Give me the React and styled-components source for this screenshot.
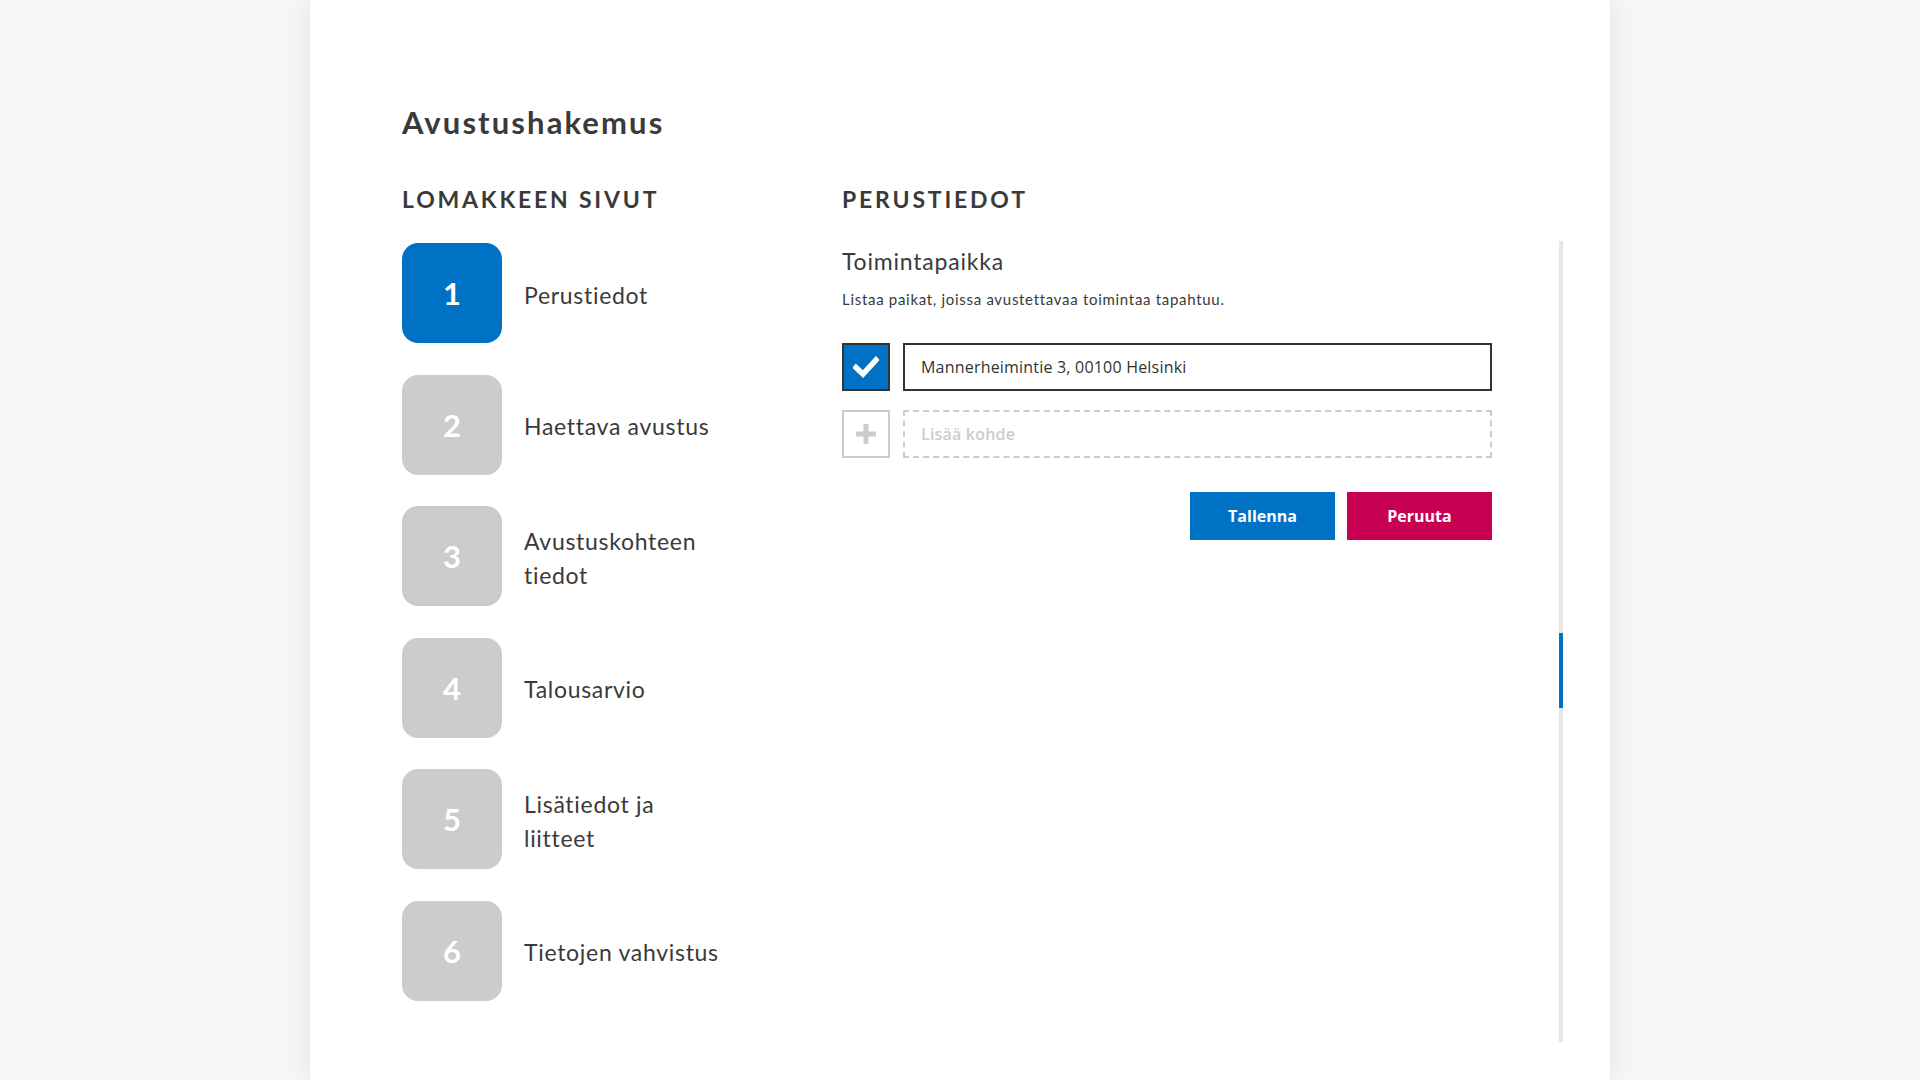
import React from "react";
import styled, { createGlobalStyle } from "styled-components";

const GlobalStyle = createGlobalStyle`
  html, body {
    margin: 0;
    padding: 0;
  }
  body {
    background: #f6f6f6;
    font-family: Lato, "Open Sans", sans-serif;
    color: #3a3a3a;
  }
  * {
    box-sizing: border-box;
  }
`;

const steps = [
  { n: 1, label: "Perustiedot", active: true },
  { n: 2, label: "Haettava avustus" },
  { n: 3, label: "Avustuskohteen tiedot" },
  { n: 4, label: "Talousarvio" },
  { n: 5, label: "Lisätiedot ja liitteet" },
  { n: 6, label: "Tietojen vahvistus" },
];

export default function App() {
  return (
    <>
      <GlobalStyle />
      <Page>
        <Panel>
          <Title>Avustushakemus</Title>
          <Columns>
            <div>
              <SectionHeading>Lomakkeen sivut</SectionHeading>
              <StepList>
                {steps.map((s) => (
                  <Step key={s.n}>
                    <StepNumber active={s.active}>{s.n}</StepNumber>
                    <StepLabel>{s.label}</StepLabel>
                  </Step>
                ))}
              </StepList>
            </div>
            <div>
              <SectionHeading>Perustiedot</SectionHeading>
              <ScrollArea>
                <FormBody>
                  <FieldTitle>Toimintapaikka</FieldTitle>
                  <FieldHelp>
                    Listaa paikat, joissa avustettavaa toimintaa tapahtuu.
                  </FieldHelp>
                  <Rows>
                    <Row>
                      <CheckBox>
                        <svg width="26" height="22" viewBox="0 0 26 22">
                          <path
                            d="M3 11.5 L10 18 L23 4"
                            fill="none"
                            stroke="#fff"
                            strokeWidth="5.5"
                            strokeLinecap="square"
                          />
                        </svg>
                      </CheckBox>
                      <TextField value="Mannerheimintie 3, 00100 Helsinki" readOnly />
                    </Row>
                    <Row>
                      <AddBox>
                        <svg width="20" height="20" viewBox="0 0 20 20">
                          <rect x="7.5" y="0" width="5" height="20" fill="#cccccc" />
                          <rect x="0" y="7.5" width="20" height="5" fill="#cccccc" />
                        </svg>
                      </AddBox>
                      <TextField dashed placeholder="Lisää kohde" />
                    </Row>
                  </Rows>
                  <Actions>
                    <Button color="#0072c6">Tallenna</Button>
                    <Button color="#c70052">Peruuta</Button>
                  </Actions>
                </FormBody>
                <Track>
                  <Thumb />
                </Track>
              </ScrollArea>
            </div>
          </Columns>
        </Panel>
      </Page>
    </>
  );
}

const Page = styled.div`
  display: flex;
  justify-content: center;
  min-height: 100vh;
`;

const Panel = styled.div`
  width: 1300px;
  min-height: 100vh;
  background: #fff;
  padding: 104px 47px 38px 92px;
  box-shadow: 0 0 24px rgba(0, 0, 0, 0.08);
`;

const Title = styled.h1`
  margin: 0;
  font-size: 31px;
  line-height: 36px;
  font-weight: 700;
  letter-spacing: 2.1px;
  color: #3a3a3a;
`;

const Columns = styled.div`
  display: grid;
  grid-template-columns: 440px 1fr;
  margin-top: 45px;
`;

const SectionHeading = styled.h2`
  margin: 0;
  font-size: 23px;
  line-height: 28px;
  font-weight: 700;
  text-transform: uppercase;
  letter-spacing: 2.8px;
  color: #3a3a3a;
`;

const StepList = styled.div`
  display: flex;
  flex-direction: column;
  gap: 31.5px;
  margin-top: 30px;
`;

const Step = styled.div`
  display: flex;
  align-items: center;
  gap: 22px;
`;

const StepNumber = styled.div`
  width: 100px;
  height: 100px;
  flex-shrink: 0;
  border-radius: 16px;
  background: ${(p) => (p.active ? "#0072c6" : "#cccccc")};
  color: #fff;
  display: flex;
  align-items: center;
  justify-content: center;
  font-size: 31px;
  font-weight: 700;
`;

const StepLabel = styled.div`
  max-width: 200px;
  padding-top: 3px;
  font-size: 23px;
  line-height: 34px;
  letter-spacing: 0.7px;
  color: #3a3a3a;
`;

const ScrollArea = styled.div`
  display: flex;
  margin-top: 28px;
  height: 801px;
`;

const FormBody = styled.div`
  width: 650px;
  padding-top: 6px;
`;

const FieldTitle = styled.h3`
  margin: 0;
  font-size: 23px;
  line-height: 28px;
  font-weight: 400;
  letter-spacing: 0.8px;
  color: #3a3a3a;
`;

const FieldHelp = styled.p`
  margin: 16px 0 0;
  font-size: 15px;
  line-height: 17px;
  letter-spacing: 0.7px;
  color: #3a3a3a;
`;

const Rows = styled.div`
  display: flex;
  flex-direction: column;
  gap: 19px;
  margin-top: 35px;
`;

const Row = styled.div`
  display: flex;
  gap: 13px;
`;

const CheckBox = styled.div`
  width: 48px;
  height: 48px;
  flex-shrink: 0;
  background: #0072c6;
  border: 2px solid #333;
  display: flex;
  align-items: center;
  justify-content: center;
`;

const AddBox = styled.div`
  width: 48px;
  height: 48px;
  flex-shrink: 0;
  border: 2px solid #cccccc;
  display: flex;
  align-items: center;
  justify-content: center;
`;

const TextField = styled.input`
  flex: 1;
  height: 48px;
  padding: 0 16px;
  border: 2px ${(p) => (p.dashed ? "dashed #cccccc" : "solid #333")};
  font-family: "Open Sans", sans-serif;
  font-size: 16px;
  letter-spacing: 0.2px;
  font-weight: ${(p) => (p.dashed ? 600 : 400)};
  color: #333;
  outline: none;
  background: #fff;

  &::placeholder {
    color: #cccccc;
  }
`;

const Actions = styled.div`
  display: flex;
  justify-content: flex-end;
  gap: 12px;
  margin-top: 34px;
`;

const Button = styled.button`
  width: 145px;
  height: 48px;
  border: none;
  background: ${(p) => p.color};
  color: #fff;
  font-family: "Open Sans", sans-serif;
  font-size: 16px;
  font-weight: 700;
  cursor: pointer;
`;

const Track = styled.div`
  width: 4px;
  margin-left: auto;
  background: #e6e6e6;
  display: flex;
  flex-direction: column;
`;

const Thumb = styled.div`
  height: 75px;
  margin-top: 392px;
  background: #0072c6;
`;
